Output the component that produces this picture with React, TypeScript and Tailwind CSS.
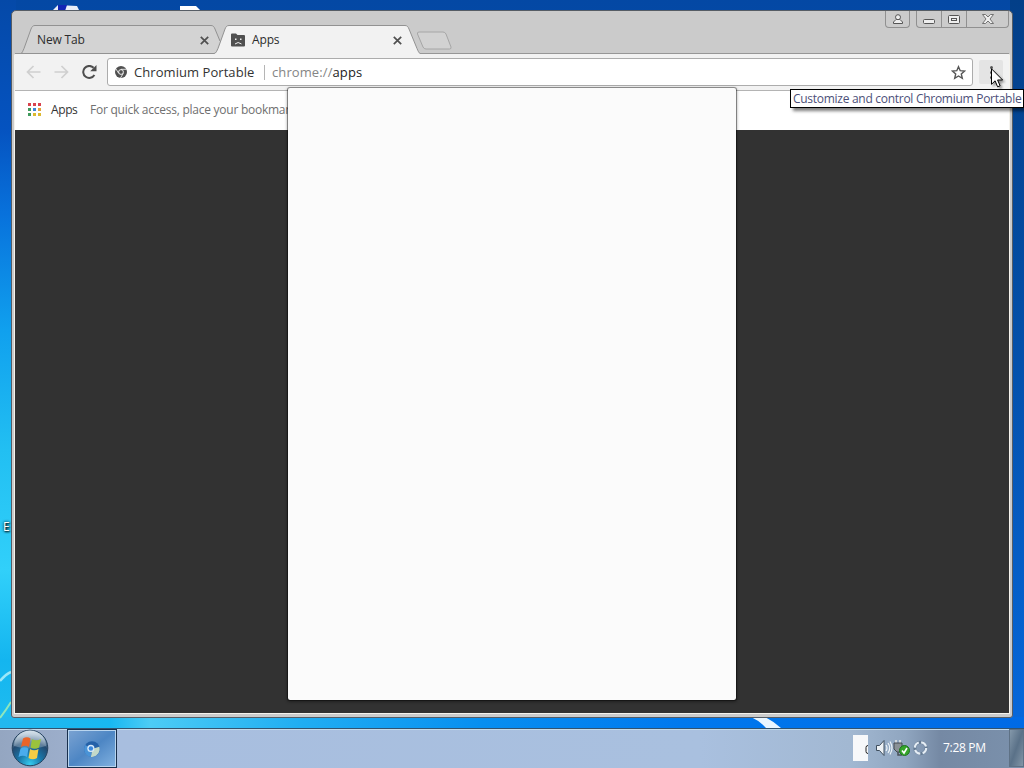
import type { ReactNode } from "react";

const appDots = [
  "bg-[#d9434e]", "bg-[#d9434e]", "bg-[#d9434e]",
  "bg-[#3f9a5c]", "bg-[#3d86d8]", "bg-[#e2a33a]",
  "bg-[#3f9a5c]", "bg-[#dcb92f]", "bg-[#dcb92f]",
];

function Wallpaper() {
  return (
    <div className="absolute inset-0 bg-linear-to-b from-[#0448a4] via-[#0458bd] to-[#0075ee]">
      <div className="absolute inset-y-0 left-0 w-[16px] bg-[linear-gradient(to_bottom,#0549a8_0,#0553c0_130px,#0872dc_215px,#10a0ee_330px,#22bff2_450px,#31d0fa_570px,#14b5ef_660px,#20bdf0_728px)]" />
      <div className="absolute right-0 top-0 h-[728px] w-[14px] bg-linear-to-b from-[#033f88] via-[#0451ac] to-[#0668dc]" />
      <div className="absolute left-0 top-[717px] h-[11px] w-full bg-[linear-gradient(to_right,#22b8ee_0,#18b8f2_110px,#4cccf5_150px,#20aef2_300px,#078ff0_480px,#0079ee_680px,#006ae5_1024px)]" />
      <svg className="absolute left-0 top-0" width="1024" height="728" fill="none">
        <path d="M52 11l6-6 19 1 2 4-1 2z" fill="#e9eef8" />
        <path d="M58 5h9l-2 6h-7z" fill="#1225b5" />
        <path d="M180 6h16l4 4v2h-20z" fill="#fff" />
        <path d="M0 681q6-7 11-9" stroke="#9be7f8" strokeWidth="2.5" />
        <path d="M0 718q6-8 11-16" stroke="#8ee6bd" strokeWidth="2" />
        <path d="M751 717h14q8 4 16 11h-15q-6-7-15-11z" fill="#eaf6ff" />
      </svg>
      <span className="absolute left-[3px] top-[520px] font-['Open_Sans',sans-serif] text-[12px] leading-[14px] text-white [text-shadow:1px_1px_2px_#000,0_0_3px_#000]">
        E
      </span>
    </div>
  );
}

function CloseIcon() {
  return (
    <svg width="9" height="9" viewBox="0 0 9 9" stroke="#505050" strokeWidth="1.7">
      <path d="M.8.8l7.4 7.4M8.2.8L.8 8.2" />
    </svg>
  );
}

function Tab({ title, active, icon }: { title: string; active?: boolean; icon?: ReactNode }) {
  return (
    <div className={active ? "relative z-10 -ml-[8px] h-[29px] w-[206px]" : "relative h-[29px] w-[201px]"}>
      {active ? (
        <svg className="absolute inset-0" width="206" height="29">
          <path d="M0 28.5c2 0 3-3 4-5L11 4c1-2.500 2-3.500 4-3.500h176c2 0 3 1 4 3.500l8 19.500c1 2.500 2 4.500 3 5V29H0z" fill="#f2f2f2" />
          <path d="M0 28.500c2 0 3-3 4-5L11 4c1-2.500 2-3.500 4-3.500h176c2 0 3 1 4 3.500l8 19.500c1 2.500 2 4.500 3 5" fill="none" stroke="#929292" />
        </svg>
      ) : (
        <svg className="absolute inset-0" width="201" height="29">
          <path d="M0 28.500c1 0 2-3 3-5L10 4c1-2.500 2-3.500 4-3.500h176c2 0 3 1 4 3.500l5 12-5 12.500z" fill="#d3d3d3" />
          <path d="M194 28.500H0c1 0 2-3 3-5L10 4c1-2.500 2-3.500 4-3.500h176c2 0 3 1 4 3.500l5 12" fill="none" stroke="#929292" />
        </svg>
      )}
      <div className={active ? "relative flex h-full items-center gap-[7px] pl-[17px] pr-[18px] pt-px" : "relative flex h-full items-center pl-[16px] pr-[13px] pt-px"}>
        {icon}
        <span className="flex-1 text-[12px] tracking-[-0.15px] text-[#2c2c2c]">{title}</span>
        <CloseIcon />
      </div>
    </div>
  );
}

function SadFolder() {
  return (
    <svg width="14" height="14" viewBox="0 0 14 14">
      <path d="M0 1.500Q0 .5 1 .5h4L6.500 2H13q1 0 1 1v9.500q0 1-1 1H1q-1 0-1-1z" fill="#505050" />
      <path d="M4 5.500h1.500V7H4zM9 5.500h1.500V7H9z" fill="#f2f2f2" />
      <path d="M4 11q3-3 6.500 0" fill="none" stroke="#f2f2f2" />
    </svg>
  );
}

function WindowButtons() {
  return (
    <div className="flex pr-[1px]">
      <div className="mr-[6px] flex h-[17px] w-[25px] items-center justify-center rounded-b-[4px] border border-t-0 border-[#909090]">
        <svg width="10" height="10" viewBox="0 0 10 10" fill="#eee" stroke="#555" strokeWidth="1">
          <path d="M.5 9.500V8L3 5.500h4L9.500 8v1.500z" />
          <circle cx="5" cy="3.200" r="2.500" />
        </svg>
      </div>
      <div className="flex h-[17px] w-[93px] rounded-b-[4px] border border-t-0 border-[#909090]">
        <div className="flex w-[25px] items-center justify-center border-r border-[#909090] pt-[4px]">
          <svg width="12" height="5" viewBox="0 0 12 5">
            <rect x=".5" y=".5" width="11" height="4" rx="1" fill="#eee" stroke="#555" />
          </svg>
        </div>
        <div className="flex w-[25px] items-center justify-center border-r border-[#909090]">
          <svg width="12" height="9" viewBox="0 0 12 9" fill="#eee" stroke="#555">
            <rect x=".5" y=".5" width="11" height="8" rx="1" />
            <rect x="3.500" y="3.500" width="5" height="2" />
          </svg>
        </div>
        <div className="flex flex-1 items-center justify-center">
          <svg width="12" height="10" viewBox="0 0 12 10">
            <path d="M.5.5h3L6 3 8.500.5h3L8 5l3.500 4.500h-3L6 7 3.500 9.500h-3L4 5z" fill="#eee" stroke="#666" strokeWidth=".9" />
          </svg>
        </div>
      </div>
    </div>
  );
}

function TabStrip() {
  return (
    <div className="relative z-10 -mb-px flex h-[43px] shrink-0 justify-between">
      <div className="flex items-end pl-[7px]">
        <Tab title="New Tab" />
        <Tab title="Apps" active icon={<SadFolder />} />
        <svg className="-ml-[4px] mb-[4px]" width="37" height="19" viewBox="0 0 37 19">
          <path d="M3 1h24q2 0 3 2l5 13q.5 2-1.500 2H10q-2 0-3-2L1.500 3Q1 1 3 1z" fill="#d2d2d2" stroke="#a6a6a6" />
        </svg>
      </div>
      <WindowButtons />
    </div>
  );
}

function Toolbar() {
  return (
    <div className="flex h-[37px] items-center border-b border-[#b4b4b4] bg-[#f2f2f2] pl-[11px]">
      <svg width="15" height="14" viewBox="0 0 15 14" fill="none" stroke="#cfcfcf" strokeWidth="1.700">
        <path d="M14.500 7H1.500M7.500 1l-6 6 6 6" />
      </svg>
      <svg className="ml-[13px]" width="15" height="14" viewBox="0 0 15 14" fill="none" stroke="#cfcfcf" strokeWidth="1.700">
        <path d="M.5 7h13M7.500 1l6 6-6 6" />
      </svg>
      <svg className="ml-[13px]" width="15" height="14" viewBox="0 0 15 14">
        <path d="M12.400 10A6 6 0 1 1 11.600 2.800" fill="none" stroke="#4e4e4e" strokeWidth="2" />
        <path d="M14.500 0v6.300H8.200z" fill="#4e4e4e" />
      </svg>
      <div className="ml-[10px] flex h-[28px] w-[866px] shrink-0 items-center rounded-[3px] border border-[#acacac] bg-white pl-[7px] pr-[6px] text-[13px]">
        <svg width="12" height="12" viewBox="0 0 12 12">
          <circle cx="6" cy="6" r="6" fill="#505050" />
          <circle cx="6" cy="6" r="2.400" fill="#505050" stroke="#fff" strokeWidth=".9" />
          <path d="M6 3.300h5.500M3.700 7.300L1 3M8.300 7.300L5.500 12" stroke="#fff" strokeWidth=".8" />
        </svg>
        <span className="ml-[7px] w-[130px] whitespace-nowrap pt-[2px] tracking-[0.06px] text-[#333]">Chromium Portable</span>
        <span className="h-[15px] w-px bg-[#b5b5b5]" />
        <span className="ml-[7px] flex-1 pt-[2px] tracking-[0.1px] text-[#222]">
          <span className="text-[#858585]">chrome://</span>apps
        </span>
        <svg width="15" height="15" viewBox="0 0 15 15" fill="none" stroke="#555" strokeWidth="1.400">
          <path d="M7.500 1.700l1.700 4 4.400.4-3.300 2.900 1 4.300-3.800-2.300-3.800 2.300 1-4.300L1.400 6.100l4.400-.4z" />
        </svg>
      </div>
      <div className="ml-[6px] flex size-[24px] shrink-0 flex-col items-center justify-center gap-[2px] rounded-[2px] bg-[#e4e4e4]">
        <span className="size-[3px] rounded-full bg-[#555]" />
        <span className="size-[3px] rounded-full bg-[#555]" />
        <span className="size-[3px] rounded-full bg-[#555]" />
      </div>
    </div>
  );
}

function BookmarksBar() {
  return (
    <div className="flex h-[39px] items-center bg-white pb-[2px] pl-[13px] text-[12px]">
      <div className="grid grid-cols-3 gap-[2px]">
        {appDots.map((color, i) => (
          <span key={i} className={`size-[3px] ${color}`} />
        ))}
      </div>
      <span className="ml-[10px] w-[39px] pt-px tracking-[-0.4px] text-[#333]">Apps</span>
      <span className="whitespace-nowrap pt-px tracking-[-0.25px] text-[#707070]">For quick access, place your bookmarks here on the bookmarks bar.</span>
    </div>
  );
}

function BrowserWindow() {
  return (
    <div className="absolute left-[11px] top-[10px] flex h-[708px] w-[1002px] flex-col rounded-t-[5px] rounded-b-[3px] border border-[#565d65] bg-[#cbcbcb] px-[2px] pb-[3px]">
      <TabStrip />
      <div className="flex flex-1 flex-col rounded-t-[2px] border border-[#f5f3ed] border-t-[#969696] bg-[#323232]">
        <Toolbar />
        <BookmarksBar />
      </div>
    </div>
  );
}

function StartOrb() {
  return (
    <svg width="38" height="38" viewBox="0 0 38 38">
      <defs>
        <radialGradient id="orb" cx=".5" cy=".95" r=".85">
          <stop offset="0" stopColor="#35cbee" />
          <stop offset=".4" stopColor="#1976a8" />
          <stop offset=".75" stopColor="#23496f" />
          <stop offset="1" stopColor="#8ba3b9" />
        </radialGradient>
        <linearGradient id="gloss" x2="0" y2="1">
          <stop stopColor="#e4edf4" stopOpacity=".85" />
          <stop offset="1" stopColor="#b7cad9" stopOpacity=".3" />
        </linearGradient>
      </defs>
      <circle cx="19" cy="19" r="17.800" fill="url(#orb)" stroke="#25435f" />
      <path d="M3 17a16 15.500 0 0 1 32 0q-16 5-32 0z" fill="url(#gloss)" />
      <path d="M12 9.500q4-2.500 7.500 0L18 18q-4-2.500-8 0z" fill="#ea6429" />
      <path d="M21 10q4 2.500 9 0l-2 8.500q-4 2.500-8.500 0z" fill="#9ac33c" />
      <path d="M9.500 19.500q4-2.500 8 0L16 28q-4-2.500-8.500 0z" fill="#4aaced" />
      <path d="M19 20q4 2.500 8.500 0L26 29q-4 2.500-8.500 0z" fill="#f8cd45" />
    </svg>
  );
}

function Tray() {
  return (
    <div className="flex h-full items-center">
      <div className="flex h-[26px] w-[15px] items-center justify-end bg-[#f7f8fa] pt-[3px]">
        <svg width="3" height="9" viewBox="0 0 3 9" fill="none" stroke="#222">
          <path d="M3 .5Q1 .5 1 2.500v4q0 2 2 2" />
        </svg>
      </div>
      <svg className="ml-[8px]" width="17" height="16" viewBox="0 0 17 16">
        <path d="M.5 5.500h3l4.500-5v15l-4.500-5h-3z" fill="#edf1f5" stroke="#3f4e5e" />
        <path d="M10 5q2 3 0 6M12 3q3.500 5 0 10M14 1.500q4 6.500 0 13" fill="none" stroke="#eef4f8" strokeWidth="1.200" />
      </svg>
      <svg width="17" height="16" viewBox="0 0 17 16">
        <path d="M3 0v3M7 0v3" stroke="#e8e8e8" strokeWidth="1.500" />
        <path d="M1 3h8v6L7 12H4L1 9z" fill="#8a9196" stroke="#444b52" />
        <path d="M5 12v3h4" fill="none" stroke="#495159" strokeWidth="1.500" />
        <circle cx="11.500" cy="10.500" r="5" fill="#35a629" stroke="#1f7322" />
        <path d="M9 10.500l2 2.500 3-5" fill="none" stroke="#fff" strokeWidth="1.600" />
      </svg>
      <svg className="ml-[3px]" width="15" height="16" viewBox="0 0 15 16" fill="none">
        <circle cx="7.500" cy="8" r="5.700" stroke="#657b93" strokeWidth="3" />
        <circle cx="7.500" cy="8" r="5.700" stroke="#e5edf5" strokeWidth="2.200" strokeDasharray="6.500 2.450" />
      </svg>
      <span className="ml-[15px] w-[51px] whitespace-nowrap text-[12px] tracking-[-0.3px] text-white">7:28 PM</span>
      <div className="ml-[15px] h-full w-[15px] border border-[#5e7185] bg-linear-to-br from-[#8498aa] via-[#5a7188] to-[#8396a7]" />
    </div>
  );
}

function Taskbar() {
  return (
    <div className="absolute bottom-0 left-0 flex h-[40px] w-full justify-between border-t border-[#32536f] bg-[linear-gradient(to_right,#94a6c1_0,#9caecb_66px,#a8bedf_117px,#a9c0df_700px,#a2b8d2_850px,#90a6c0_905px,#7589a4_940px,#7b91ac_1024px)] pb-px shadow-[inset_0_1px_0_#c2dbec]">
      <div className="flex">
        <div className="flex w-[67px] items-center pl-[11px]">
          <StartOrb />
        </div>
        <div className="flex h-[39px] w-[50px] items-center justify-center border border-[#182f4c] bg-linear-to-br from-[#7ba3d2] via-[#4d86c4] to-[#82b2e0] shadow-[inset_0_0_0_1px_#b9d5ef]">
          <svg width="18" height="18" viewBox="0 0 16 16">
            <circle cx="8" cy="8" r="7" fill="#2461a8" />
            <path d="M8 8l6.500-2a7 7 0 0 1-7.500 9z" fill="#c3d9c9" />
            <path d="M8 8l-1 7A7 7 0 0 1 2 4.500z" fill="#4a93d6" />
            <circle cx="7" cy="7.500" r="3.200" fill="#d8eafa" />
            <circle cx="7" cy="7.500" r="2" fill="#3a88dd" />
          </svg>
        </div>
      </div>
      <Tray />
    </div>
  );
}

export default function App() {
  return (
    <div className="relative h-[768px] w-[1024px] overflow-hidden font-['Open_Sans',sans-serif]">
      <Wallpaper />
      <BrowserWindow />
      <div className="absolute left-[287px] top-[87px] h-[614px] w-[450px] rounded-[3px] border border-black/35 bg-[#fbfbfb] bg-clip-padding shadow-[0_1px_3px_rgba(0,0,0,0.35)]" />
      <Taskbar />
      <div className="absolute left-[790px] top-[89px] flex h-[19px] w-[234px] items-center whitespace-nowrap border border-black bg-white pl-[2px] text-[12px] tracking-[-0.28px] text-[#4c5079] shadow-[3px_3px_3px_rgba(0,0,0,0.5)]">
        Customize and control Chromium Portable
      </div>
      {/* mouse pointer */}
      <svg className="absolute left-[991px] top-[68px] drop-shadow-[2px_2px_1px_rgba(0,0,0,0.35)]" width="13" height="20" viewBox="0 0 13 20">
        <path d="M.5.8v15.500l3.600-3.500 2.500 6 2.500-1-2.500-5.800h5z" fill="#fff" stroke="#000" />
      </svg>
    </div>
  );
}
